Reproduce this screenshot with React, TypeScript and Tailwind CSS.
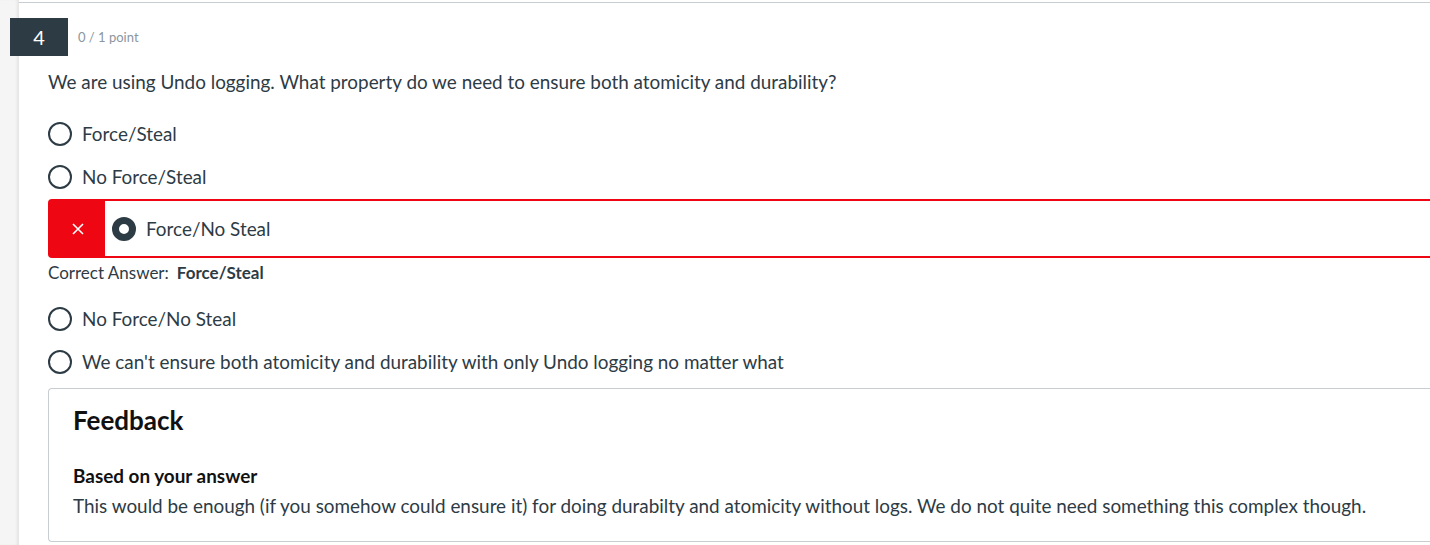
const OPTIONS_TOP = ['Force/Steal', 'No Force/Steal'];
const OPTIONS_BOTTOM = [
  'No Force/No Steal',
  "We can't ensure both atomicity and durability with only Undo logging no matter what",
];

function Radio({ label }: { label: string }) {
  return (
    <div className="flex h-[43px] items-center">
      <span className="box-border h-6 w-6 shrink-0 rounded-full border-2 border-[#2d3b45]" />
      <span className="ml-[10px] text-[18.9px] leading-[27px] text-[#2d3b45]">{label}</span>
    </div>
  );
}

function WrongAnswer() {
  return (
    <div className="mt-[1px] flex h-[59px] items-stretch rounded-l-[4px] border-2 border-r-0 border-[#ee0612]">
      <div className="flex w-[55px] shrink-0 items-center justify-center bg-[#ee0612]">
        <svg width="14" height="14" viewBox="0 0 14 14" fill="none" stroke="white" strokeWidth="1.6">
          <path d="M2 2 L12 12 M12 2 L2 12" />
        </svg>
      </div>
      <div className="flex items-center pl-[7px]">
        <span className="box-border h-6 w-6 shrink-0 rounded-full border-[7px] border-[#2d3b45] bg-white" />
        <span className="ml-[10px] text-[18.9px] leading-[27px] text-[#2d3b45]">Force/No Steal</span>
      </div>
    </div>
  );
}

export default function App() {
  return (
    <div
      className="flex h-[545px] w-[1430px] overflow-hidden bg-white"
      style={{ fontFamily: 'Lato, "Open Sans", sans-serif' }}
    >
      <div className="w-[19px] shrink-0 bg-[#f5f5f5] shadow-[inset_-3px_0_3px_-1px_rgba(0,0,0,0.07)]" />
      <div className="min-w-0 flex-1 pt-[2px]">
        <div className="border-t border-[#c7cdd1]" />
        <div className="mt-[15px] flex items-center">
          <div className="relative z-10 -ml-[9px] flex h-[38px] w-[58px] items-center justify-center bg-[#2d3b45] text-[20px] text-white">
            4
          </div>
          <span className="ml-[10px] mt-[2px] text-[13px] text-[#8b969e]">0 / 1 point</span>
        </div>

        <div className="ml-[29px] w-[1420px]">
          <p className="mt-[12px] text-[18.9px] leading-[27px] text-[#2d3b45]">
            We are using Undo logging. What property do we need to ensure both atomicity and durability?
          </p>
          <div className="mt-[17px]">
            {OPTIONS_TOP.map((o) => (
              <Radio key={o} label={o} />
            ))}
          </div>
          <WrongAnswer />
          <div className="mt-[5px] flex h-[20px] items-center text-[17px] text-[#2d3b45]">
            Correct Answer:
            <span className="ml-[8px] font-bold">Force/Steal</span>
          </div>
          <div className="mt-[14px]">
            {OPTIONS_BOTTOM.map((o) => (
              <Radio key={o} label={o} />
            ))}
          </div>

          <div className="mt-[5px] h-[154px] rounded-l-[4px] border border-r-0 border-[#c7cdd1] pl-6 pt-[15px]">
            <h3 className="text-[26px] font-bold leading-[32px] text-[#111]">Feedback</h3>
            <h4 className="mt-[26px] text-[18.9px] font-bold leading-[27px] text-[#111]">Based on your answer</h4>
            <p className="mt-[3px] text-[18.9px] leading-[27px] text-[#2d3b45]">
              This would be enough (if you somehow could ensure it) for doing durabilty and atomicity without logs. We do
              not quite need something this complex though.
            </p>
          </div>
        </div>
      </div>
    </div>
  );
}
